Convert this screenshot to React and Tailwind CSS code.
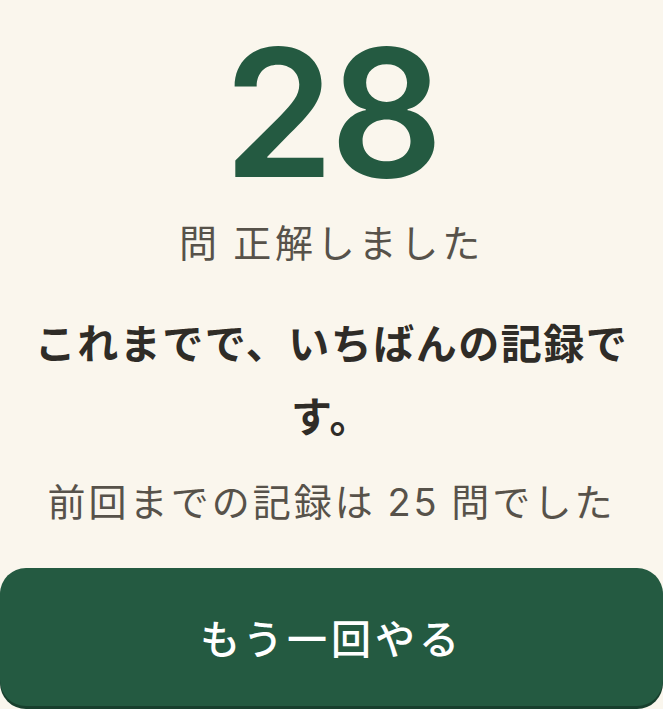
export default function App() {
  return (
    <div
      className="min-h-screen w-full bg-[#faf6ed] flex flex-col items-center text-center"
      style={{ fontFamily: '"Noto Sans CJK JP", "Noto Sans", sans-serif' }}
    >
      <div
        className="mt-[25px] text-[177px] leading-none font-semibold text-[#245a41] tracking-[-4px]"
        style={{ fontFamily: 'Inter, "Noto Sans", sans-serif' }}
      >
        28
      </div>
      <div className="mt-[20px] text-[38px] leading-none text-[#57524a] tracking-[0.1em]">
        問 正解しました
      </div>
      <div className="mt-[45px] w-[620px] text-[41px] leading-[73px] font-bold text-[#2f2c27] tracking-[1.5px]">
        これまでで、いちばんの記録です。
      </div>
      <div className="mt-[30px] text-[38px] leading-none text-[#57524a] tracking-[0.08em]">
        前回までの記録は{" "}
        <span style={{ fontFamily: 'Inter, "Noto Sans", sans-serif' }}>25</span> 問でした
      </div>
      <button className="mt-[47px] w-full h-[138px] shrink-0 rounded-[26px] bg-[#245a41] shadow-[0_3px_0_#183f2d] text-white text-[40px] font-medium tracking-[4px]">
        もう一回やる
      </button>
    </div>
  );
}
